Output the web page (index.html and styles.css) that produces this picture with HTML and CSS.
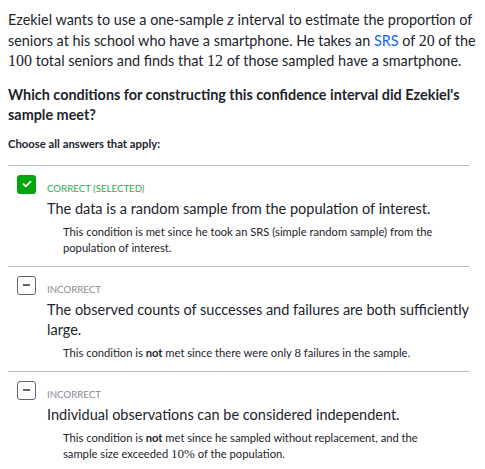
FILE: index.html
```html
<!DOCTYPE html>
<html>
<head>
<meta charset="utf-8">
<link rel="stylesheet" href="styles.css">
</head>
<body>
<div class="page">
  <p class="stem">Ezekiel wants to use a one-sample <span class="math it">z</span> interval to estimate the proportion of seniors at his school who have a smartphone. He takes an <a class="link">SRS</a> of <span class="math">20</span> of the <span class="math">100</span> total seniors and finds that <span class="math">12</span> of those sampled have a smartphone.</p>
  <p class="question">Which conditions for constructing this confidence interval did Ezekiel's sample meet?</p>
  <p class="instr">Choose all answers that apply:</p>
  <ul class="choices">
    <li class="choice">
      <span class="box box-correct"><svg width="10" height="8" viewBox="0 0 10 8"><path d="M1.5 4.2 L3.8 6.3 L8.5 1.6" fill="none" stroke="#fff" stroke-width="1.8" stroke-linecap="round" stroke-linejoin="round"/></svg></span>
      <div class="body">
        <div class="status status-correct">Correct (selected)</div>
        <div class="answer">The data is a random sample from the population of interest.</div>
        <div class="explain">This condition is met since he took an SRS (simple random sample) from the population of interest.</div>
      </div>
    </li>
    <li class="choice">
      <span class="box box-wrong"><span class="dash"></span></span>
      <div class="body">
        <div class="status">Incorrect</div>
        <div class="answer">The observed counts of successes and failures are both sufficiently large.</div>
        <div class="explain">This condition is <b>not</b> met since there were only <span class="math">8</span> failures in the sample.</div>
      </div>
    </li>
    <li class="choice">
      <span class="box box-wrong"><span class="dash"></span></span>
      <div class="body">
        <div class="status">Incorrect</div>
        <div class="answer">Individual observations can be considered independent.</div>
        <div class="explain">This condition is <b>not</b> met since he sampled without replacement, and the sample size exceeded <span class="math">10%</span> of the population.</div>
      </div>
    </li>
  </ul>
</div>
</body>
</html>
```

FILE: styles.css
```css
html, body {
  margin: 0;
  padding: 0;
  background: #fff;
}
body {
  font-family: Lato, "Open Sans", sans-serif;
  color: #21242c;
}
.page {
  padding: 10px 8px 0 8px;
}
.stem {
  margin: 0;
  font-size: 14.4px;
  line-height: 20.5px;
}
.math {
  font-family: "Liberation Serif", serif;
  font-size: 16px;
  line-height: 1;
}
.math.it {
  font-style: italic;
  font-size: 17px;
}
.link {
  color: #1865f2;
}
.question {
  margin: 13px 0 0;
  font-size: 14.4px;
  font-weight: 700;
  line-height: 20px;
}
.instr {
  margin: 11px 0 0;
  font-size: 11.3px;
  font-weight: 700;
  line-height: 16px;
}
.choices {
  list-style: none;
  margin: 13px 8px 0 0;
  padding: 0;
  border-top: 1px solid #bababe;
}
.choice {
  display: flex;
  gap: 11px;
  padding: 9px 0 0 9px;
  border-bottom: 1px solid #bababe;
}
.choice:last-child {
  border-bottom: none;
}
.box {
  flex: none;
  width: 19px;
  height: 19px;
  box-sizing: border-box;
  border-radius: 3px;
  display: flex;
  align-items: center;
  justify-content: center;
}
.box-correct {
  background: #00a60e;
}
.box-wrong {
  border: 1px solid #626569;
}
.dash {
  width: 7px;
  height: 2px;
  background: #626569;
}
.body {
  flex: 1;
  padding-top: 7px;
}
.status {
  font-size: 9.7px;
  line-height: 12px;
  text-transform: uppercase;
  color: #888d93;
}
.status-correct {
  color: #1fab54;
}
.answer {
  margin-top: 5px;
  font-size: 14.5px;
  line-height: 20px;
}
.explain {
  margin: 5px 16px 0 16px;
  padding-bottom: 10px;
  font-size: 11.2px;
  line-height: 16px;
}
.explain .math {
  font-size: 13px;
  line-height: 1;
}
```
